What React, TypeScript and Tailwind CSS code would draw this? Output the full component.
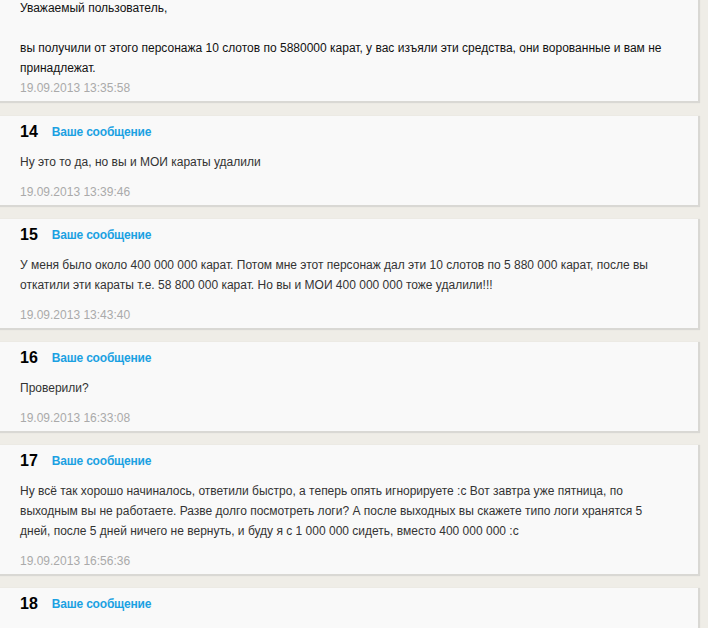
const messages = [
  {
    num: 14,
    text: ["Ну это то да, но вы и МОИ караты удалили"],
    date: "19.09.2013 13:39:46",
  },
  {
    num: 15,
    text: [
      "У меня было около 400 000 000 карат. Потом мне этот персонаж дал эти 10 слотов по 5 880 000 карат, после вы откатили эти караты т.е. 58 800 000 карат. Но вы и МОИ 400 000 000 тоже удалили!!!",
    ],
    date: "19.09.2013 13:43:40",
  },
  {
    num: 16,
    text: ["Проверили?"],
    date: "19.09.2013 16:33:08",
  },
  {
    num: 17,
    text: [
      "Ну всё так хорошо начиналось, ответили быстро, а теперь опять игнорируете :c Вот завтра уже пятница, по выходным вы не работаете. Разве долго посмотреть логи? А после выходных вы скажете типо логи хранятся 5 дней, после 5 дней ничего не вернуть, и буду я с 1 000 000 сидеть, вместо 400 000 000 :c",
    ],
    date: "19.09.2013 16:56:36",
  },
];

function Card({ children }: { children: React.ReactNode }) {
  return (
    <div className="w-[700px] border-r-2 border-b-2 border-[#d9d8d4] bg-[#f9f9f9] px-5 pb-[3px] pt-[6px] shadow-[0_0_1px_rgba(0,0,0,0.08)]">
      {children}
    </div>
  );
}

export default function App() {
  return (
    <div
      className="h-[628px] w-[708px] overflow-hidden bg-[#efede7] text-[12px] leading-[20px]"
      style={{ fontFamily: '"Liberation Sans", Arial, sans-serif' }}
    >
      <div className="flex flex-col gap-[12px]">
        {/* tail of the previous answer */}
        <div className="-mt-[8px] mb-[1px]">
          <Card>
            <p className="text-[#111]">
              Уважаемый пользователь,
              <br />
              <br />
              вы получили от этого персонажа 10 слотов по 5880000 карат, у вас изъяли эти средства, они ворованные и вам не принадлежат.
            </p>
            <div className="text-[#aaa]">19.09.2013 13:35:58</div>
          </Card>
        </div>

        {messages.map((m) => (
          <Card key={m.num}>
            <div className="flex items-center gap-[14px] leading-[20px]">
              <span className="text-[16px] font-bold text-black">{m.num}</span>
              <span className="font-bold tracking-[-0.2px] text-[#1ba1e2]">Ваше сообщение</span>
            </div>
            <p className="mt-[10px] pr-2 text-[#333]">{m.text}</p>
            <div className="mt-[10px] text-[#aaa]">{m.date}</div>
          </Card>
        ))}

        <Card>
          <div className="flex items-center gap-[14px] leading-[20px]">
            <span className="text-[16px] font-bold text-black">18</span>
            <span className="font-bold tracking-[-0.2px] text-[#1ba1e2]">Ваше сообщение</span>
          </div>
          <div className="h-[40px]" />
        </Card>
      </div>
    </div>
  );
}
